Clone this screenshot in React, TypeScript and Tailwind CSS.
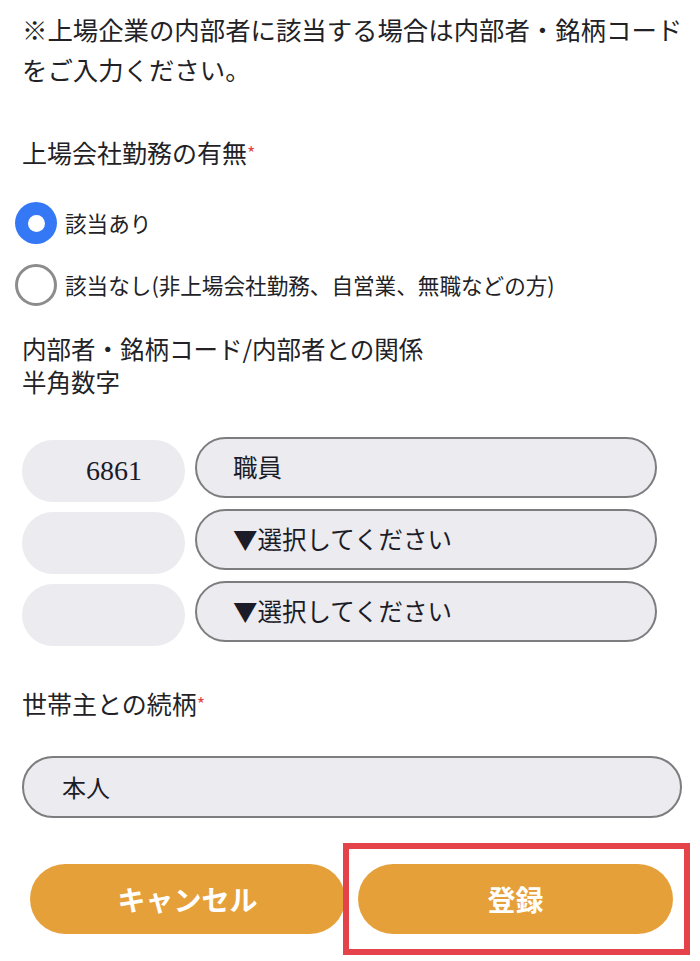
const jp = '"Noto Sans CJK JP", "Noto Sans", sans-serif';

function Radio({ checked, label }: { checked: boolean; label: string }) {
  return (
    <div className="flex h-[62px] items-center">
      {checked ? (
        <span className="flex h-[42px] w-[42px] items-center justify-center rounded-full bg-[#3478f6]">
          <span className="h-[17px] w-[17px] rounded-full bg-white" />
        </span>
      ) : (
        <span className="h-[42px] w-[42px] rounded-full border-[3px] border-[#8c8c8c] bg-white" />
      )}
      <span className="ml-[8px] text-[21.6px] text-[#222226]">{label}</span>
    </div>
  );
}

function CodeRow({ code, relation }: { code: string; relation: string }) {
  return (
    <div className="flex h-[62px] items-start gap-[10px]">
      <div
        className="mt-[3px] flex h-[62px] w-[163px] items-center rounded-[31px] bg-[#ebebf0] pl-[64px] text-[28px] text-[#1c1c28]"
        style={{ fontFamily: '"Liberation Serif", serif' }}
      >
        {code}
      </div>
      <div className="flex h-[61px] w-[462px] items-center rounded-[31px] border-2 border-[#7d7d80] bg-[#ebebf0] pl-[36px] text-[24.5px] text-[#1c1c28]">
        {relation}
      </div>
    </div>
  );
}

export default function App() {
  return (
    <div className="min-h-[961px] bg-white pl-[22px]" style={{ fontFamily: jp }}>
      <p className="pt-[9px] text-[25.4px] leading-[40px] text-[#222226]">
        ※上場企業の内部者に該当する場合は内部者・銘柄コード
        <br />
        をご入力ください。
      </p>

      <p className="mt-[46px] text-[25px] leading-[34px] text-[#222226]">
        上場会社勤務の有無<span className="align-top text-[18px] text-[#e04848]">*</span>
      </p>

      <div className="mt-[23px] -ml-[7px]">
        <Radio checked label="該当あり" />
        <Radio checked={false} label="該当なし(非上場会社勤務、自営業、無職などの方)" />
      </div>

      <p className="mt-[16px] text-[24.5px] leading-[33px] text-[#222226]">
        内部者・銘柄コード/内部者との関係
        <br />
        半角数字
      </p>

      <div className="mt-[39px] flex flex-col gap-[10px]">
        <CodeRow code="6861" relation="職員" />
        <CodeRow code="" relation="▼選択してください" />
        <CodeRow code="" relation="▼選択してください" />
      </div>

      <p className="mt-[43px] text-[25px] leading-[34px] text-[#222226]">
        世帯主との続柄<span className="align-top text-[18px] text-[#e04848]">*</span>
      </p>

      <div className="mt-[36px] flex h-[62px] w-[660px] items-center rounded-[31px] border-2 border-[#7d7d80] bg-[#ebebf0] pl-[38px] text-[24px] text-[#1c1c28]">
        本人
      </div>

      <div className="mt-[46px] flex gap-[13px] pl-[8px]">
        <button className="flex h-[70px] w-[315px] items-center justify-center rounded-[35px] bg-[#e6a03a] text-[28px] font-bold text-white">
          キャンセル
        </button>
        <div className="relative">
          <button className="flex h-[70px] w-[315px] items-center justify-center rounded-[35px] bg-[#e6a03a] text-[28px] font-bold text-white">
            登録
          </button>
          <div className="pointer-events-none absolute -top-[21px] -bottom-[21px] -left-[15px] -right-[17px] border-[6px] border-[#e5434a]" />
        </div>
      </div>
    </div>
  );
}
